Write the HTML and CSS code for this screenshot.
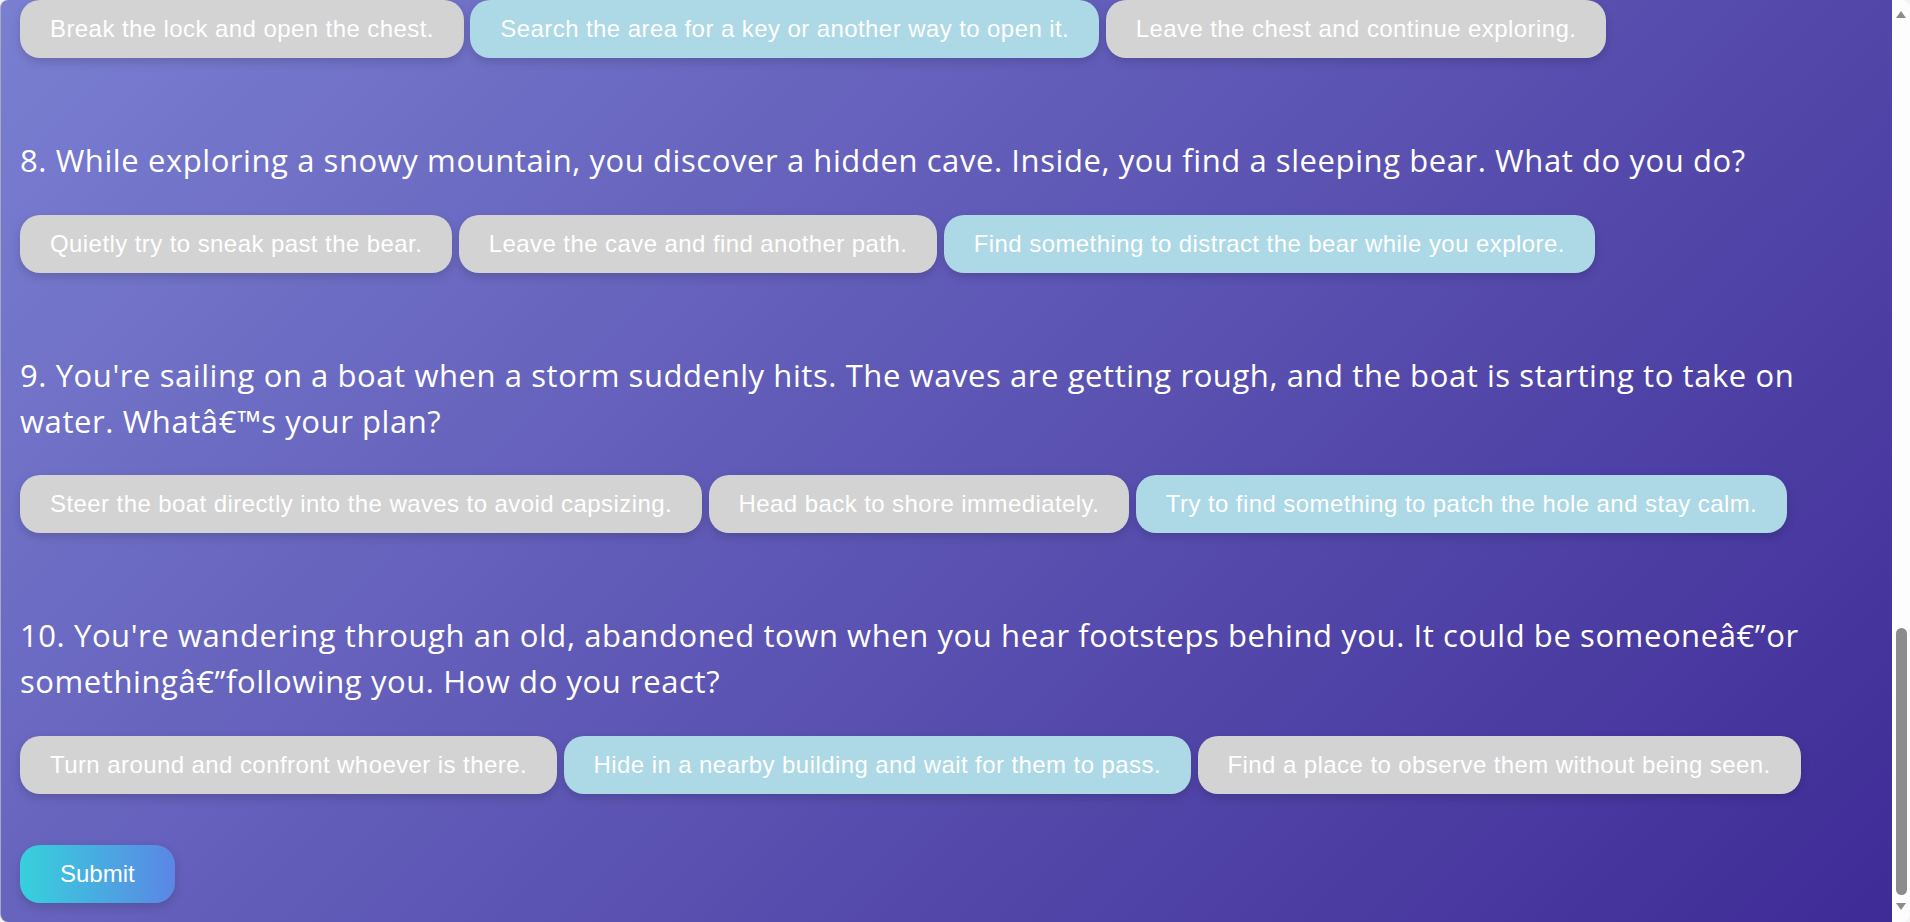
FILE: index.html
```html
<!DOCTYPE html>
<html lang="en">
<head>
<meta charset="utf-8">
<title>Adventure Quiz</title>
<link rel="stylesheet" href="styles.css">
</head>
<body>
<div class="window">
  <main class="quiz">
    <div class="question question-continued">
      <div class="options">
        <button class="option">Break the lock and open the chest.</button>
        <button class="option selected">Search the area for a key or another way to open it.</button>
        <button class="option">Leave the chest and continue exploring.</button>
      </div>
    </div>

    <div class="question">
      <p class="question-text">8. While exploring a snowy mountain, you discover a hidden cave. Inside, you find a sleeping bear. What do you do?</p>
      <div class="options">
        <button class="option">Quietly try to sneak past the bear.</button>
        <button class="option">Leave the cave and find another path.</button>
        <button class="option selected">Find something to distract the bear while you explore.</button>
      </div>
    </div>

    <div class="question">
      <p class="question-text">9. You're sailing on a boat when a storm suddenly hits. The waves are getting rough, and the boat is starting to take on water. Whatâ€™s your plan?</p>
      <div class="options">
        <button class="option">Steer the boat directly into the waves to avoid capsizing.</button>
        <button class="option">Head back to shore immediately.</button>
        <button class="option selected">Try to find something to patch the hole and stay calm.</button>
      </div>
    </div>

    <div class="question">
      <p class="question-text">10. You're wandering through an old, abandoned town when you hear footsteps behind you. It could be someoneâ€”or somethingâ€”following you. How do you react?</p>
      <div class="options">
        <button class="option">Turn around and confront whoever is there.</button>
        <button class="option selected">Hide in a nearby building and wait for them to pass.</button>
        <button class="option">Find a place to observe them without being seen.</button>
      </div>
    </div>

    <button class="submit">Submit</button>
  </main>

  <div class="scrollbar" aria-hidden="true">
    <span class="arrow arrow-up"></span>
    <div class="track"><span class="thumb"></span></div>
    <span class="arrow arrow-down"></span>
  </div>
</div>
</body>
</html>
```

FILE: styles.css
```css
html,
body {
  margin: 0;
  height: 100%;
}

body {
  background: #f3f3f3;
  overflow: hidden;
  font-family: "Liberation Sans", Arial, sans-serif;
}

.window {
  display: flex;
  height: 100vh;
}

.quiz {
  flex: 1;
  min-width: 0;
  box-sizing: border-box;
  padding: 0 20px 0 19px;
  border-left: 1px solid #a8a8b8;
  border-radius: 8px 0 0 8px;
  background: linear-gradient(135deg, rgb(122, 127, 209) 0%, #3f2b96 100%);
  overflow: hidden;
}

.question {
  margin-top: 79px;
}

.question-continued {
  margin-top: 0;
}

.question-text {
  margin: 0 0 31.5px;
  max-width: 1800px;
  color: #ffffff;
  font-family: "Open Sans", "Noto Sans", sans-serif;
  font-size: 31px;
  line-height: 46px;
  letter-spacing: 0.58px;
}

.options {
  display: flex;
  flex-wrap: wrap;
  gap: 6.5px;
}

.option {
  padding: 15px 30px;
  border: none;
  border-radius: 20px;
  background: #d3d3d3;
  color: #ffffff;
  font-family: "Liberation Sans", Arial, sans-serif;
  font-size: 24px;
  line-height: normal;
  letter-spacing: 0.42px;
  box-shadow: 0 4px 10px rgba(0, 0, 0, 0.15);
  cursor: pointer;
}

.option.selected {
  background: #add8e6;
}

.submit {
  display: block;
  margin-top: 51px;
  padding: 15px 40px;
  border: none;
  border-radius: 20px;
  background: linear-gradient(to right, #36d1dc, #5b86e5);
  color: #ffffff;
  font-family: "Liberation Sans", Arial, sans-serif;
  font-size: 24px;
  line-height: normal;
  box-shadow: 0 4px 10px rgba(0, 0, 0, 0.15);
  cursor: pointer;
}

/* drawn window scrollbar */
.scrollbar {
  width: 18px;
  flex: none;
  display: flex;
  flex-direction: column;
  align-items: center;
  padding: 11px 0 12px;
  box-sizing: border-box;
  background: #fdfdfd;
  border-radius: 0 8px 8px 0;
}

.arrow {
  width: 0;
  height: 0;
  border-left: 5.5px solid transparent;
  border-right: 5.5px solid transparent;
}

.arrow-up {
  border-bottom: 7px solid #8c8c8c;
}

.arrow-down {
  border-top: 7px solid #8c8c8c;
}

.track {
  flex: 1;
  display: flex;
  flex-direction: column;
  justify-content: flex-end;
  padding-bottom: 8px;
}

.thumb {
  width: 11px;
  height: 267px;
  border-radius: 6px;
  background: #8c8c8c;
}
```
